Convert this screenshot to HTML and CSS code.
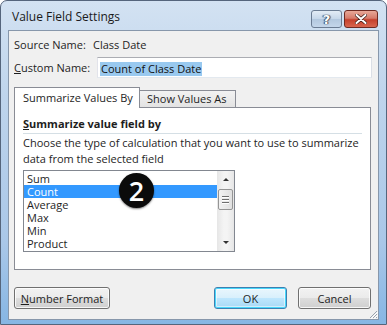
FILE: index.html
```html
<!DOCTYPE html>
<html lang="en">
<head>
    <meta charset="UTF-8">
    <title>Value Field Settings</title>
    <link rel="stylesheet" href="styles.css">
</head>
<body>
    <div class="window">
        <div class="titlebar">
            <span class="title">Value Field Settings</span>
            <div class="captionBtns">
                <span class="capBtn help">?</span>
                <span class="capBtn close">
                    <svg width="12" height="10" viewBox="0 0 12 10">
                        <path d="M1.5 1 L10.5 9 M10.5 1 L1.5 9" stroke="#3b1a14" stroke-width="3.4" stroke-linecap="round"/>
                        <path d="M1.5 1 L10.5 9 M10.5 1 L1.5 9" stroke="#fff" stroke-width="2" stroke-linecap="round"/>
                    </svg>
                </span>
            </div>
        </div>

        <div class="client">
            <div class="row sourceRow">
                <span class="sourceLabel">Source Name:</span>
                <span>Class Date</span>
            </div>
            <div class="row customRow">
                <label class="customLabel"><u>C</u>ustom Name:</label>
                <div class="textbox"><span class="selected">Count of Class Date</span></div>
            </div>

            <div class="tabs">
                <div class="tab active">Summarize Values By</div>
                <div class="tab">Show Values As</div>
            </div>
            <div class="panel">
                <div class="groupTitle"><u>S</u>ummarize value field by</div>
                <p class="desc">Choose the type of calculation that you want to use to summarize data from the selected field</p>
                <div class="listbox">
                    <ul class="items">
                        <li>Sum</li>
                        <li class="current">Count</li>
                        <li>Average</li>
                        <li>Max</li>
                        <li>Min</li>
                        <li>Product</li>
                    </ul>
                    <div class="scrollbar">
                        <div class="arrowBtn"><span class="arrowUp"></span></div>
                        <div class="track">
                            <div class="thumb">
                                <span class="gripLine"></span>
                                <span class="gripLine"></span>
                                <span class="gripLine"></span>
                            </div>
                        </div>
                        <div class="arrowBtn"><span class="arrowDown"></span></div>
                    </div>
                    <span class="badge">2</span>
                </div>
            </div>

            <div class="footer">
                <button class="btn numberBtn"><u>N</u>umber Format</button>
                <div class="spacer"></div>
                <button class="btn okBtn">OK</button>
                <button class="btn">Cancel</button>
            </div>

            <svg class="sizeGrip" width="10" height="10" viewBox="0 0 10 10">
                <path d="M9 2 L2 9 M9 5 L5 9 M9 8 L8 9" stroke="#9aa3ad" stroke-width="1"/>
                <path d="M10 3 L3 10 M10 6 L6 10" stroke="#fff" stroke-width="1"/>
            </svg>
        </div>
    </div>
</body>
</html>
```

FILE: styles.css
```css
* {
    margin: 0;
    padding: 0;
    box-sizing: border-box;
}

body {
    width: 387px;
    height: 325px;
    overflow: hidden;
    font-family: 'Open Sans', 'Noto Sans', sans-serif;
    font-size: 11px;
    color: #1e1e1e;
    background-color: #fff;
}

u {
    text-decoration: underline;
    text-underline-offset: 1px;
}

/* Aero frame */
.window {
    width: 387px;
    height: 325px;
    display: flex;
    flex-direction: column;
    padding: 0 7px 4px 7px;
    border: 1px solid #55657c;
    border-radius: 7px 7px 0 0;
    background: linear-gradient(to bottom, #d3e2f2 0, #bed4ec 30%, #a9c7e8 75%, #86b6e4 100%);
}

.titlebar {
    height: 29px;
    display: flex;
    align-items: flex-start;
    justify-content: space-between;
}

.title {
    margin-top: 7px;
    margin-left: 4px;
    font-size: 12px;
    color: #1a1a1a;
}

.captionBtns {
    display: flex;
    gap: 2px;
    margin-top: 9px;
    margin-right: 1px;
}

.capBtn {
    height: 18px;
    display: flex;
    align-items: center;
    justify-content: center;
    border: 1px solid #6b7c93;
    border-radius: 3px;
}

.help {
    width: 31px;
    background: linear-gradient(to bottom, #e3ecf6 0, #c7d8ea 48%, #b3c8df 52%, #c4d6ea 100%);
    color: #fff;
    font-family: 'DejaVu Sans', sans-serif;
    font-weight: bold;
    font-size: 13px;
    text-shadow: 0 0 1px #31425a, 1px 0 1px #31425a, -1px 0 1px #31425a;
}

.close {
    width: 34px;
    border-color: #6e2a22;
    background: linear-gradient(to bottom, #e8a898 0, #d67b6b 45%, #c5402c 55%, #d8664f 100%);
}

/* Dialog body */
.client {
    position: relative;
    flex: 1;
    padding: 5px 7px 0 5px;
    border: 1px solid #8797ab;
    background-color: #f0f0f0;
}

.row {
    display: flex;
    align-items: center;
}

.sourceRow {
    height: 16px;
}

.sourceLabel {
    width: 79px;
}

.customRow {
    margin-top: 5px;
    height: 21px;
}

.customLabel {
    width: 83px;
}

.textbox {
    flex: 1;
    height: 21px;
    margin-right: -1px;
    padding: 3px 0 0 2px;
    border: 1px solid #abadb3;
    border-color: #abadb3 #dbdfe6 #e3e9ef #e2e3ea;
    background-color: #fff;
}

.selected {
    display: inline-block;
    height: 14px;
    line-height: 14px;
    padding: 0 1px;
    background-color: #99c9ef;
    color: #111;
}

/* Tabs */
.tabs {
    margin-top: 9px;
    height: 20px;
    display: flex;
    align-items: flex-end;
}

.tab {
    height: 17px;
    padding: 0 7px;
    line-height: 16px;
    white-space: nowrap;
    border: 1px solid #898c95;
    border-bottom: none;
    background: linear-gradient(to bottom, #f2f2f2, #e3e3e3);
}

.tab.active {
    position: relative;
    z-index: 1;
    width: 126px;
    height: 21px;
    margin-bottom: -1px;
    padding: 0 0 0 8px;
    line-height: 20px;
    background: #fff;
}

.tab + .tab {
    width: 96px;
    border-left: none;
}

.panel {
    height: 163px;
    padding: 8px 8px 0 8px;
    border: 1px solid #898c95;
    background-color: #fff;
}

.groupTitle {
    height: 18px;
    line-height: 16px;
    font-weight: bold;
    border-bottom: 1px solid #d5dfe5;
}

.desc {
    margin-top: 1px;
    line-height: 16px;
}

/* List box */
.listbox {
    position: relative;
    margin-top: 3px;
    width: 212px;
    height: 82px;
    display: flex;
    border: 1px solid #828790;
    background-color: #fff;
}

.items {
    flex: 1;
    list-style: none;
    padding-top: 1px;
}

.items li {
    height: 13px;
    line-height: 13px;
    padding-left: 3px;
}

.items li.current {
    background-color: #3399ff;
    color: #fff;
}

.scrollbar {
    width: 17px;
    display: flex;
    flex-direction: column;
    background: linear-gradient(to right, #e6e6e6, #f4f4f4 40%, #f4f4f4 60%, #e6e6e6);
}

.arrowBtn {
    height: 17px;
    display: flex;
    align-items: center;
    justify-content: center;
}

.arrowUp {
    border-left: 3px solid transparent;
    border-right: 3px solid transparent;
    border-bottom: 3px solid #333;
}

.arrowDown {
    border-left: 3px solid transparent;
    border-right: 3px solid transparent;
    border-top: 3px solid #333;
}

.track {
    flex: 1;
    padding-top: 1px;
}

.thumb {
    margin: 0 1px;
    height: 21px;
    display: flex;
    flex-direction: column;
    align-items: center;
    justify-content: center;
    gap: 2px;
    border: 1px solid #959595;
    border-radius: 2px;
    background: linear-gradient(to right, #f2f2f2, #e0e0e0);
}

.gripLine {
    width: 7px;
    height: 1px;
    background-color: #6e6e6e;
    box-shadow: 0 1px 0 #fff;
}

/* step marker on top of the list */
.badge {
    position: absolute;
    left: 95px;
    top: 2px;
    width: 35px;
    height: 35px;
    border-radius: 50%;
    background-color: #0b0b0b;
    color: #fff;
    font-family: 'Open Sans', sans-serif;
    font-size: 27px;
    font-weight: 600;
    line-height: 35px;
    text-align: center;
    box-shadow: 0 1px 2px rgba(0, 0, 0, 0.5);
}

/* Buttons */
.footer {
    margin-top: 17px;
    display: flex;
    gap: 11px;
}

.spacer {
    flex: 1;
}

.btn {
    width: 73px;
    height: 22px;
    font-family: 'Open Sans', 'Noto Sans', sans-serif;
    font-size: 11px;
    color: #1e1e1e;
    border: 1px solid #707070;
    border-radius: 3px;
    background: linear-gradient(to bottom, #f2f2f2 0, #ebebeb 48%, #dddddd 52%, #cfcfcf 100%);
    box-shadow: inset 0 0 0 1px rgba(255, 255, 255, 0.8);
}

.numberBtn {
    width: 96px;
}

.okBtn {
    border-color: #3c7fb1;
    box-shadow: inset 0 0 0 1px #48d7fb, inset 0 0 0 2px rgba(255, 255, 255, 0.5);
    background: linear-gradient(to bottom, #eaf6fd 0, #d9f0fc 48%, #bee6fd 52%, #a7d9f5 100%);
}

.sizeGrip {
    position: absolute;
    right: 0;
    bottom: 0;
}
```
